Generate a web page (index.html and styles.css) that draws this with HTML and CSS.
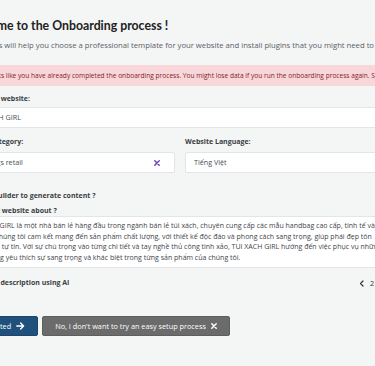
FILE: index.html
```html
<!DOCTYPE html>
<html lang="en">
<head>
<meta charset="utf-8">
<title>Onboarding</title>
<link rel="stylesheet" href="styles.css">
</head>
<body>
<main class="page">
  <h1 class="title">Welcome to the Onboarding process !</h1>
  <p class="subtitle">These steps will help you choose a professional template for your website and install plugins that you might need to achieve your goals.</p>
  <div class="alert">It looks like you have already completed the onboarding process. You might lose data if you run the onboarding process again. Select a new template only if you want to start over.</div>

  <label class="label first">Name your website:</label>
  <div class="input name">TUI XACH GIRL</div>

  <div class="row">
    <div class="col">
      <label class="label">Website Category:</label>
      <div class="input select">
        <span>Handbags retail</span>
        <svg class="clear" width="6" height="6" viewBox="0 0 6 6"><path d="M0.8 0.8L5.2 5.2M5.2 0.8L0.8 5.2" stroke="#6f42c1" stroke-width="1.5" stroke-linecap="round"/></svg>
      </div>
    </div>
    <div class="col">
      <label class="label">Website Language:</label>
      <div class="input">Tiếng Việt</div>
    </div>
  </div>

  <div class="check-row"><span class="checkbox"></span><span class="label-inline">Use AI builder to generate content ?</span></div>

  <label class="label about">Whats your website about ?</label>
  <div class="textarea">
    <span class="line">TUI XACH GIRL là một nhà bán lẻ hàng đầu trong ngành bán lẻ túi xách, chuyên cung cấp các mẫu handbag cao cấp, tinh tế và</span>
    <span class="line">nữ tính. Chúng tôi cam kết mang đến sản phẩm chất lượng, với thiết kế độc đáo và phong cách sang trọng, giúp phái đẹp tôn</span>
    <span class="line">vinh thêm tự tin. Với sự chú trọng vào từng chi tiết và tay nghề thủ công tinh xảo, TUI XACH GIRL hướng đến việc phục vụ những</span>
    <span class="line">người đang yêu thích sự sang trọng và khác biệt trong từng sản phẩm của chúng tôi.</span>
  </div>

  <div class="ai-row">
    <span class="label-inline">Generate a description using AI</span>
    <span class="pager">
      <svg width="6" height="7" viewBox="0 0 6 7"><path d="M4 1L1.5 3.5L4 6" fill="none" stroke="#333" stroke-width="1.2" stroke-linecap="round" stroke-linejoin="round"/></svg>
      <span>2 / 3</span>
      <svg width="6" height="7" viewBox="0 0 6 7"><path d="M2 1L4.5 3.5L2 6" fill="none" stroke="#333" stroke-width="1.2" stroke-linecap="round" stroke-linejoin="round"/></svg>
    </span>
  </div>

  <div class="actions">
    <button class="btn primary">Get started
      <svg width="9" height="8" viewBox="0 0 9 8"><path d="M0.8 4H7.6M4.6 1L7.6 4L4.6 7" fill="none" stroke="#fff" stroke-width="1.4" stroke-linecap="round" stroke-linejoin="round"/></svg>
    </button>
    <button class="btn secondary">No, I don't want to try an easy setup process
      <svg width="6" height="6" viewBox="0 0 6 6"><path d="M0.8 0.8L5.2 5.2M5.2 0.8L0.8 5.2" stroke="#fff" stroke-width="1.5" stroke-linecap="round"/></svg>
    </button>
  </div>
</main>
</body>
</html>
```
FILE: styles.css
```css
html, body {
  margin: 0;
  padding: 0;
  background: #f4f5f5;
  overflow: hidden;
}
body {
  font-family: "Open Sans", "Liberation Sans", sans-serif;
  color: #343a40;
  width: 375px;
  height: 366px;
}
.page {
  width: 440px;
  margin-left: -40px;
  padding-top: 17px;
  display: flex;
  flex-direction: column;
}
.title {
  margin: 0;
  padding-left: 2px;
  font-family: "Lato", "Open Sans", sans-serif;
  font-size: 12.3px;
  line-height: 18px;
  font-weight: 700;
  color: #222;
  white-space: nowrap;
}
.subtitle {
  margin: 5px 0 0;
  font-size: 7.7px;
  line-height: 10px;
  color: #5a6169;
  white-space: nowrap;
}
.alert {
  margin-top: 15px;
  height: 21px;
  line-height: 21px;
  padding: 0 22px;
  background: #f8d7da;
  color: #842029;
  font-size: 6.6px;
  white-space: nowrap;
  overflow: hidden;
}
.label {
  display: block;
  font-size: 7px;
  line-height: 10px;
  font-weight: 700;
  color: #3a3f44;
  white-space: nowrap;
  margin-bottom: 3px;
}
.label.first { margin-top: 8px; }
.input {
  box-sizing: border-box;
  height: 21px;
  background: #fff;
  border: 1px solid #e3e5e7;
  border-radius: 2px;
  padding: 0 8px;
  font-size: 7.2px;
  line-height: 19px;
  color: #495057;
  white-space: nowrap;
  overflow: hidden;
}
.input.name { padding-left: 11px; }
.select {
  display: flex;
  align-items: center;
  justify-content: space-between;
  padding-left: 9px;
  padding-right: 14px;
}
.row {
  display: grid;
  grid-template-columns: 215px 215px;
  gap: 10px;
  margin-top: 9px;
}
.row .label { margin-bottom: 5px; }
.check-row {
  display: flex;
  align-items: center;
  gap: 2px;
  margin-top: 18px;
  height: 10px;
}
.checkbox {
  width: 8px;
  height: 8px;
  border: 1px solid #adb5bd;
  border-radius: 2px;
  background: #fff;
  box-sizing: border-box;
}
.label-inline {
  font-size: 7px;
  line-height: 10px;
  font-weight: 700;
  color: #3a3f44;
  white-space: nowrap;
}
.label.about { margin-top: 5px; margin-bottom: 0; }
.textarea {
  box-sizing: border-box;
  height: 52px;
  background: #fff;
  border-top: 1px solid #e3e5e7;
  border-bottom: 1px solid #e3e5e7;
  padding: 4px 7px;
  font-size: 7px;
  line-height: 10.5px;
  color: #3f454b;
  overflow: hidden;
}
.line {
  display: block;
  white-space: nowrap;
}
.ai-row {
  display: flex;
  justify-content: space-between;
  align-items: center;
  margin-top: 10px;
  height: 10px;
}
.pager {
  display: flex;
  align-items: center;
  gap: 5px;
  font-size: 7.4px;
  color: #333;
  padding-right: 4px;
}
.actions {
  display: flex;
  gap: 4px;
  margin-top: 28px;
}
.btn {
  display: flex;
  align-items: center;
  gap: 5px;
  height: 20px;
  padding: 0 12px;
  border-radius: 2px;
  font-family: "Open Sans", "Liberation Sans", sans-serif;
  font-size: 7.3px;
  color: #fff;
  cursor: pointer;
}
.btn.primary {
  background: #20507c;
  border: 1px solid #1b456b;
}
.btn.secondary {
  background: #6b6b6b;
  border: 1px solid #5e5e5e;
}
```
